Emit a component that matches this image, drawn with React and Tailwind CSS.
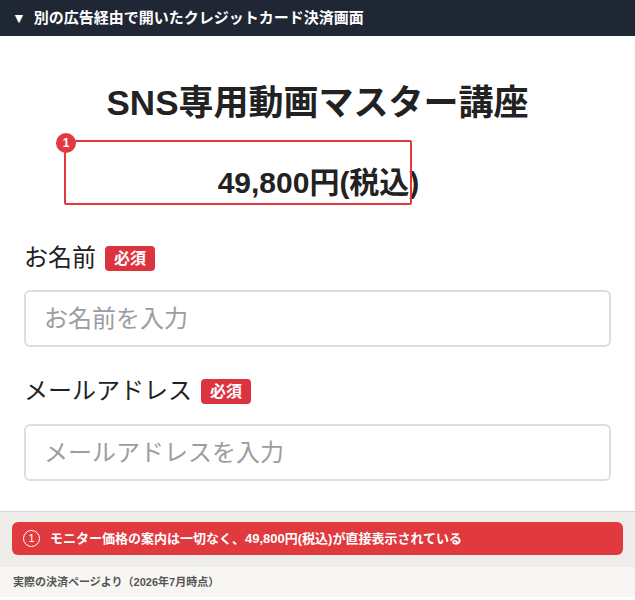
export default function App() {
  const font = { fontFamily: '"Liberation Sans", "Noto Sans CJK JP", sans-serif' };

  return (
    <div className="w-[635px] h-[600px] overflow-hidden bg-white" style={font}>
      <div className="h-9 bg-[#1f2634] flex items-center px-3 text-white text-[15px] font-bold">
        <span className="text-[14px] mr-[8px]">▼</span>
        <span>別の広告経由で開いたクレジットカード決済画面</span>
      </div>

      <div className="bg-white pt-[45px] pb-[30px]">
        <h1 className="text-center text-[35px] leading-[43px] font-bold text-[#222]">SNS専用動画マスター講座</h1>

        <div className="relative mt-[41px] text-center text-[30px] leading-[36px] font-bold text-[#222] pl-[2px]">
          49,800円(税込)
          <div className="absolute left-[64px] top-[-25px] w-[348px] h-[65px] border-2 border-[#e03a3e] rounded-[2px]"></div>
          <div className="absolute left-[56px] top-[-32px] w-5 h-5 rounded-full bg-[#e03a3e] text-white text-[12px] leading-5 font-bold text-center">1</div>
        </div>

        <div className="px-6 mt-[44px]">
          <div className="flex items-center gap-[9px] h-[26px]">
            <span className="text-[24px] text-[#222]">お名前</span>
            <span className="bg-[#dc343f] text-white text-[16px] font-bold rounded-[4px] px-[9px] h-[25px] leading-[25px]">必須</span>
          </div>
          <div className="mt-[19px] h-[57px] border-2 border-[#dcdee2] rounded-[6px] flex items-center px-[18px] text-[24px] text-[#9a9da3]">
            お名前を入力
          </div>

          <div className="flex items-center gap-[9px] h-[26px] mt-[31px]">
            <span className="text-[24px] text-[#222]">メールアドレス</span>
            <span className="bg-[#dc343f] text-white text-[16px] font-bold rounded-[4px] px-[9px] h-[25px] leading-[25px]">必須</span>
          </div>
          <div className="mt-[20px] h-[57px] border-2 border-[#dcdee2] rounded-[6px] flex items-center px-[18px] text-[24px] text-[#9a9da3]">
            メールアドレスを入力
          </div>
        </div>
      </div>

      <div className="border-t border-[#d8d6d1] bg-[#eeede9] px-3 pt-[10px] pb-[12px]">
        <div className="h-[33px] bg-[#e0393e] rounded-[6px] flex items-center px-[11px] text-white text-[13px] font-bold">
          <span className="w-[17px] h-[17px] rounded-full border-[1.5px] border-white flex items-center justify-center text-[11px] font-normal leading-none mr-[10px]">1</span>
          <span>モニター価格の案内は一切なく、49,800円(税込)が直接表示されている</span>
        </div>
      </div>

      <div className="bg-[#f7f6f3] h-[30px] px-[13px] flex items-center text-[11px] text-[#555] font-semibold">
        実際の決済ページより（2026年7月時点）
      </div>
    </div>
  );
}
